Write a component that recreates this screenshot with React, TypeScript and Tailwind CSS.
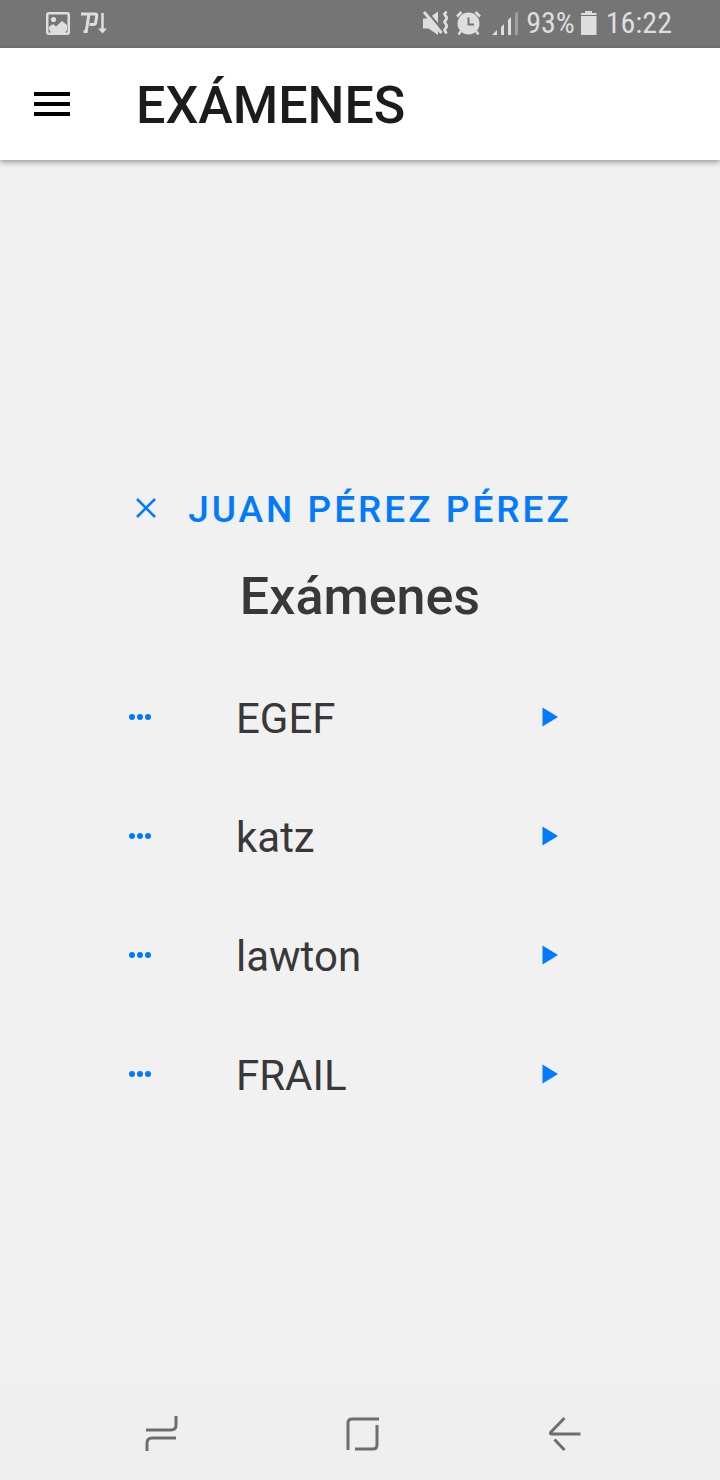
import React from "react";

const exams = ["EGEF", "katz", "lawton", "FRAIL"];

function StatusBar() {
  return (
    <div className="flex h-12 items-center justify-between bg-[#757575] pr-12 pb-0.5 pl-[46px] font-['Roboto_Condensed','Roboto',sans-serif] text-[30px] leading-none text-[#dedede]">
      <div className="flex items-center gap-[10px]">
        <svg width="24" height="24" viewBox="0 0 24 24" aria-hidden="true">
          <rect x="1.25" y="2.25" width="21.5" height="20.5" rx="1.5" fill="none" stroke="currentColor" strokeWidth="2.5" />
          <circle cx="7.5" cy="8.5" r="2.6" fill="currentColor" />
          <path d="M3 18v-2l4-3 3 2.500 6-5.500 5 4v5l-2 3H5z" fill="currentColor" />
        </svg>
        <svg width="28" height="24" viewBox="0 0 28 24" fill="none" stroke="currentColor" aria-hidden="true">
          <path d="M1 3h14.5q1.5 0 1.2 2l-1 6.5q-.3 2-2.2 2H9.500" strokeWidth="3" />
          <path d="M9 3L6.200 20.500H3.500" strokeWidth="3" />
          <path d="M22.500 2v17" strokeWidth="2.500" />
          <path d="M18 17.500h9l-4.500 5z" fill="currentColor" stroke="none" />
        </svg>
      </div>
      <div className="flex items-center">
        <svg width="26" height="26" viewBox="0 0 26 26" fill="none" stroke="currentColor" aria-hidden="true">
          <path d="M1 8.500h5L16 1.500v23.500L6.500 18.500H1z" fill="currentColor" stroke="none" />
          <path d="M4.500 1L20 19.500" stroke="#757575" strokeWidth="2.200" />
          <path d="M2 2l17.500 21" strokeWidth="3" />
          <path d="M24.500 1.500l-2 2.500 2.500 4-2.500 4 2.500 4-2.500 4 2 3.500" strokeWidth="2.800" />
        </svg>
        <svg className="ml-2" width="25" height="26" viewBox="0 0 25 26" aria-hidden="true">
          <circle cx="12.500" cy="13.500" r="11" fill="currentColor" />
          <path d="M1 6.500L5.500 2M24 6.500L19.500 2M5 21l-2.500 3.500M20 21l2.500 3.500" fill="none" stroke="currentColor" strokeWidth="2.500" />
          <path d="M12.500 7.500v7h5.500" fill="none" stroke="#757575" strokeWidth="2" />
        </svg>
        <svg className="ml-[11px]" width="26" height="26" viewBox="0 0 26 26" fill="currentColor" aria-hidden="true">
          <path d="M0 25l5-5v5zM9 25V17l3-3v11zM16 25V10l3-3v18z" />
          <path d="M23 25V3.500L26 1v24z" opacity=".4" />
        </svg>
        <span className="ml-2">93%</span>
        <svg className="ml-[5px]" width="17" height="26" viewBox="0 0 17 26" fill="currentColor" aria-hidden="true">
          <path d="M5 1h7v2h4.500v2H1V3h4zM1 6h15.500v19H1z" />
        </svg>
        <span className="ml-[9px]">16:22</span>
      </div>
    </div>
  );
}

function Header() {
  return (
    <header className="z-10 flex h-28 items-center gap-8 bg-white px-4 shadow-[0_2px_6px_rgba(0,0,0,0.4)]">
      <button type="button" aria-label="Menú" className="flex size-[72px] items-center justify-center">
        <svg width="36" height="24" viewBox="0 0 36 24" aria-hidden="true">
          <path d="M0 0h36v4H0zM0 10h36v4H0zM0 20h36v4H0z" />
        </svg>
      </button>
      <h1 className="pt-1 pl-4 text-[52px] leading-[60px] font-medium text-[#1c1c1e]">EXÁMENES</h1>
    </header>
  );
}

function ExamRow({ name }: { name: string }) {
  return (
    <li className="flex h-[119px] items-center">
      <button type="button" aria-label={`Opciones de ${name}`} className="flex size-10 items-center justify-center text-[#007aff]">
        <svg width="24" height="8" viewBox="0 0 24 8" fill="currentColor" aria-hidden="true">
          <circle cx="4" cy="4" r="3" />
          <circle cx="12" cy="4" r="3" />
          <circle cx="20" cy="4" r="3" />
        </svg>
      </button>
      <span className="flex-1 pt-1 pl-[76px] text-[42px] leading-[48px]">{name}</span>
      <button type="button" aria-label={`Iniciar ${name}`} className="flex size-10 items-center justify-center text-[#007aff]">
        <svg width="16" height="20" viewBox="0 0 16 20" fill="currentColor" aria-hidden="true">
          <path d="M.5.500L16 10 .5 19.500z" />
        </svg>
      </button>
    </li>
  );
}

function NavigationBar() {
  return (
    <nav className="flex h-24 items-center justify-center gap-[137px] bg-[#efefef] pt-1 pl-1.5 text-[#6e6e6e]">
      <button type="button" aria-label="Recientes" className="flex size-16 items-center justify-center">
        <svg width="34" height="38" viewBox="0 0 34 38" fill="none" stroke="currentColor" strokeWidth="3" aria-hidden="true">
          <path d="M1 15h25q5 0 5-5V1M31 23H7q-5 0-5 5v8" />
        </svg>
      </button>
      <button type="button" aria-label="Inicio" className="flex size-16 items-center justify-center">
        <svg width="34" height="34" viewBox="0 0 34 34" fill="none" stroke="currentColor" strokeWidth="3" aria-hidden="true">
          <path d="M2 33V6q0-4 4-4H33M31 8v20q0 4-4 4H9" />
        </svg>
      </button>
      <button type="button" aria-label="Atrás" className="flex size-16 items-center justify-center">
        <svg width="34" height="36" viewBox="0 0 34 36" fill="none" stroke="currentColor" strokeWidth="3" aria-hidden="true">
          <path d="M17.500 2L4 16q-1.500 2 1 2H33.500M7.500 23.500L17.500 34" strokeLinejoin="round" />
        </svg>
      </button>
    </nav>
  );
}

export default function App() {
  return (
    <div className="flex min-h-screen flex-col bg-[#f1f1f1] font-['Roboto',sans-serif] text-[#383838]">
      <StatusBar />
      <Header />
      <main className="flex flex-1 flex-col items-center justify-center px-4 pt-[63px]">
        <button type="button" className="flex h-[72px] items-center gap-8 pr-3 text-[37px] leading-[42px] font-medium tracking-[3px] text-[#007aff]">
          <svg className="mb-1" width="20" height="20" viewBox="0 0 20 20" fill="none" stroke="currentColor" strokeWidth="2.500" aria-hidden="true">
            <path d="M1 1l18 18M19 1L1 19" />
          </svg>
          JUAN PÉREZ PÉREZ
        </button>
        <h2 className="mt-5 text-[52px] leading-[62px] font-medium">Exámenes</h2>
        <ul className="mt-[29px] w-full max-w-[480px] pr-[30px]">
          {exams.map((name) => (
            <ExamRow key={name} name={name} />
          ))}
        </ul>
      </main>
      <NavigationBar />
    </div>
  );
}
